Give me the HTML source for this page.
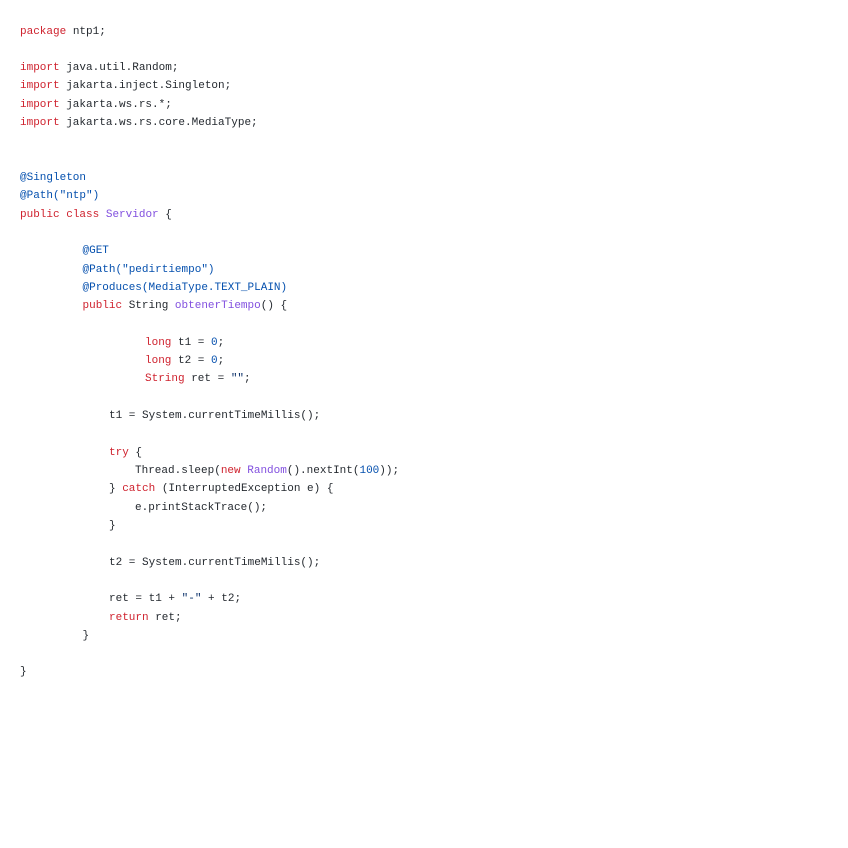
<!DOCTYPE html><html><head><style>
body{margin:0;background:#fff;width:848px;height:848px;overflow:hidden}
pre{margin:0;padding:22.5px 0 0 20px;font-family:"Liberation Mono",monospace;font-size:11px;line-height:18.31px;color:#24292f}
.k{color:#cf222e}.a{color:#0550ae}.p{color:#8250df}.n{color:#0550ae}.s{color:#0a3069}
span.i{display:inline-block}
</style></head><body><pre><span class="k">package</span> ntp1;

<span class="k">import</span> java.util.Random;
<span class="k">import</span> jakarta.inject.Singleton;
<span class="k">import</span> jakarta.ws.rs.*;
<span class="k">import</span> jakarta.ws.rs.core.MediaType;


<span class="a">@Singleton</span>
<span class="a">@Path("ntp")</span>
<span class="k">public</span> <span class="k">class</span> <span class="p">Servidor</span> {

<span class="i" style="width:62.5px"></span><span class="a">@GET</span>
<span class="i" style="width:62.5px"></span><span class="a">@Path("pedirtiempo")</span>
<span class="i" style="width:62.5px"></span><span class="a">@Produces(MediaType.TEXT_PLAIN)</span>
<span class="i" style="width:62.5px"></span><span class="k">public</span> String <span class="p">obtenerTiempo</span>() {

<span class="i" style="width:125px"></span><span class="k">long</span> t1 = <span class="n">0</span>;
<span class="i" style="width:125px"></span><span class="k">long</span> t2 = <span class="n">0</span>;
<span class="i" style="width:125px"></span><span class="k">String</span> ret = <span class="s">""</span>;

<span class="i" style="width:89px"></span>t1 = System.currentTimeMillis();

<span class="i" style="width:89px"></span><span class="k">try</span> {
<span class="i" style="width:115px"></span>Thread.sleep(<span class="k">new</span> <span class="p">Random</span>().nextInt(<span class="n">100</span>));
<span class="i" style="width:89px"></span>} <span class="k">catch</span> (InterruptedException e) {
<span class="i" style="width:115px"></span>e.printStackTrace();
<span class="i" style="width:89px"></span>}

<span class="i" style="width:89px"></span>t2 = System.currentTimeMillis();

<span class="i" style="width:89px"></span>ret = t1 + <span class="s">"-"</span> + t2;
<span class="i" style="width:89px"></span><span class="k">return</span> ret;
<span class="i" style="width:62.5px"></span>}

}
</pre></body></html>
